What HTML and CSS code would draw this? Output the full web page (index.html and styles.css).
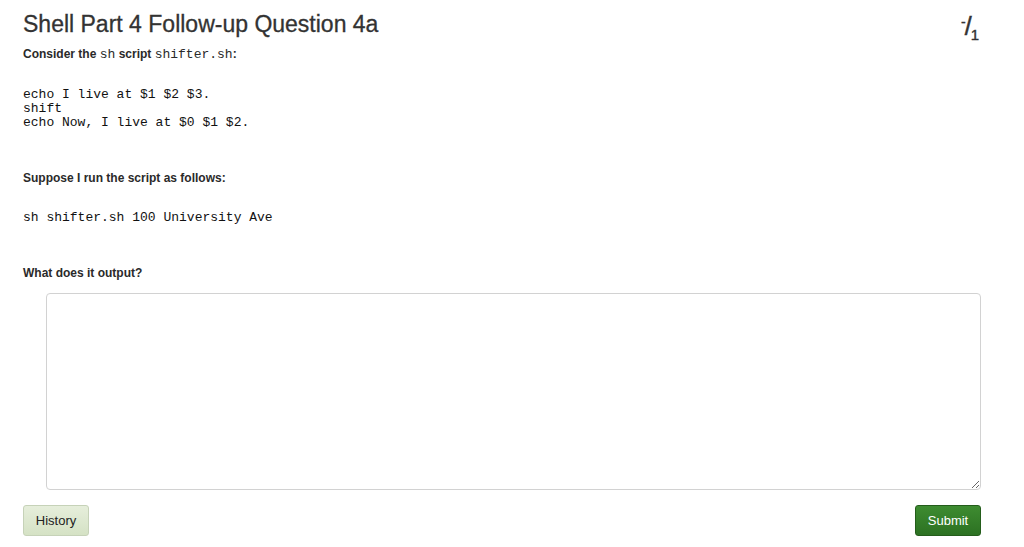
FILE: index.html
```html
<!DOCTYPE html>
<html>
<head>
<meta charset="utf-8">
<link rel="stylesheet" href="styles.css">
</head>
<body>
<div class="page">
  <div class="header">
    <h1 class="title">Shell Part 4 Follow-up Question 4a</h1>
    <div class="score"><span class="dash">-</span><span class="slash">/</span><span class="one">1</span></div>
  </div>
  <p class="text">Consider the <code>sh</code> script <code>shifter.sh</code>:</p>
  <pre class="code">echo I live at $1 $2 $3.
shift
echo Now, I live at $0 $1 $2.</pre>
  <p class="text q2">Suppose I run the script as follows:</p>
  <pre class="code cmd">sh shifter.sh 100 University Ave</pre>
  <p class="text q3">What does it output?</p>
  <div class="answer"><textarea class="box"></textarea></div>
  <div class="actions">
    <button class="btn history">History</button>
    <button class="btn submit">Submit</button>
  </div>
</div>
</body>
</html>
```
FILE: styles.css
```css
* { box-sizing: border-box; }
body {
  margin: 0;
  background: #fff;
  font-family: "Liberation Sans", Arial, sans-serif;
  color: #333;
}
.page {
  padding: 13px 43px 0 23px;
}
.header {
  display: flex;
  justify-content: space-between;
  align-items: flex-start;
  height: 29px;
}
.title {
  margin: -2px 0 0;
  font-size: 23px;
  font-weight: normal;
  line-height: 26px;
  color: #333;
  -webkit-text-stroke: 0.3px #333;
}
.score {
  display: flex;
  align-items: flex-start;
  height: 26px;
  margin-top: 1px;
  margin-right: 2px;
  color: #333;
}
.score .dash { font-size: 14px; line-height: 14px; margin-top: 1px; margin-right: -1px; -webkit-text-stroke: 0.3px #333; }
.score .slash { font-size: 25px; line-height: 25px; -webkit-text-stroke: 0.5px #333; }
.score .one { font-size: 15px; line-height: 15px; margin-top: 13px; margin-left: -1px; -webkit-text-stroke: 0.4px #333; }
.text {
  margin: 4px 0 0;
  font-size: 12px;
  line-height: 16px;
  font-weight: bold;
  color: #2a2a2a;
}
.text code {
  font-family: "Liberation Mono", "Courier New", monospace;
  font-weight: normal;
  font-size: 13px;
}
.code {
  margin: 25px 0 0;
  font-family: "Liberation Mono", "Courier New", monospace;
  font-size: 13px;
  line-height: 14px;
  color: #111;
}
.q2 { margin-top: 40px; }
.cmd { margin-top: 25px; }
.q3 { margin-top: 40px; }
.answer {
  margin: 12px 0 0 23px;
}
.box {
  display: block;
  width: 935px;
  height: 197px;
  border: 1px solid #d2d2d2;
  border-radius: 4px;
  resize: vertical;
  outline: none;
  font-family: "Liberation Sans", Arial, sans-serif;
}
.actions {
  display: flex;
  justify-content: space-between;
  margin-top: 15px;
}
.btn {
  height: 31px;
  padding: 0 11px;
  font-family: "Liberation Sans", Arial, sans-serif;
  font-size: 13px;
  border-radius: 3px;
  cursor: pointer;
}
.history {
  width: 66px;
  background: linear-gradient(#e6eedb, #d5e2c5);
  border: 1px solid #c6d2b8;
  color: #222;
}
.submit {
  width: 66px;
  background: linear-gradient(#3e8c31, #2c7122);
  border: 1px solid #245d1b;
  color: #fff;
}
```
